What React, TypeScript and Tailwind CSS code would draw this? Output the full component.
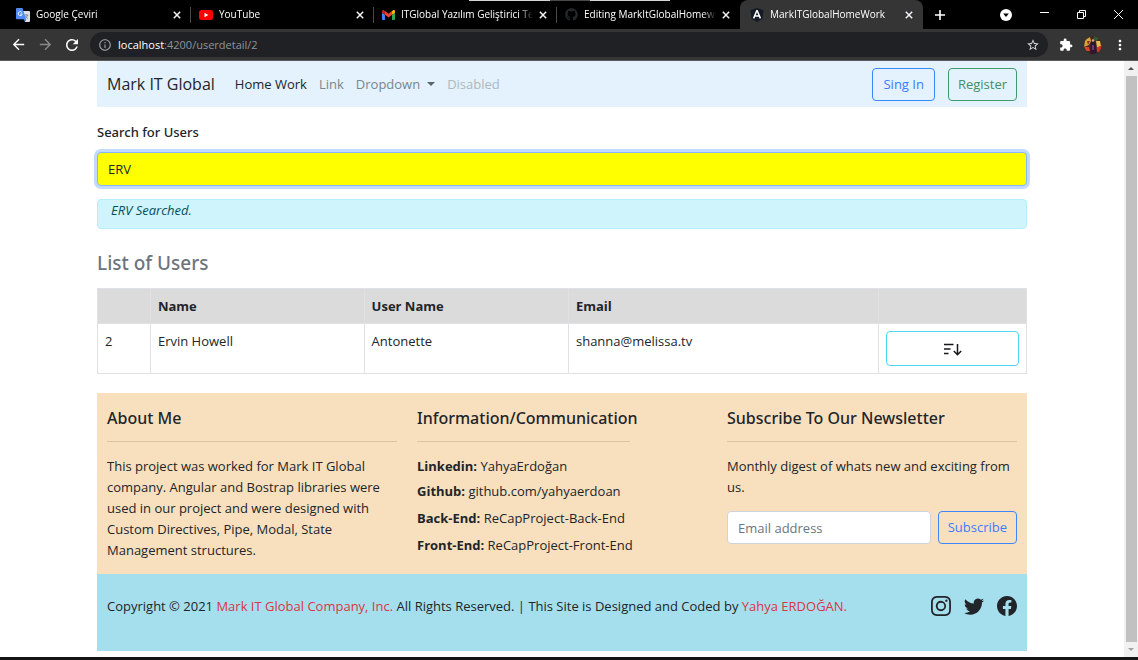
import type { ReactNode } from "react";
import { BsInstagram, BsTwitter, BsFacebook } from "react-icons/bs";
import { FaGithub } from "react-icons/fa";
import { MdArrowBack, MdArrowForward, MdRefresh, MdStarBorder, MdMoreVert, MdInfoOutline, MdExtension } from "react-icons/md";

function TranslateIcon() {
  return (
    <svg viewBox="0 0 14 14" className="size-[14px]">
      <path d="M6 3h7a1 1 0 0 1 1 1v9a1 1 0 0 1-1 1H9z" fill="#dfe1e4" />
      <path d="M8.3 7h4M10.3 6v1M11.6 7c-.4 1.8-1.600 2.800-2.600 3.300M9.500 8.200c.6 1.200 1.600 2 2.600 2.400" stroke="#6b7f8c" strokeWidth=".8" fill="none" />
      <path d="M7.500 11.300 9 14 10.300 11.300z" fill="#3367d6" />
      <path d="M1 0h5.500L10 11.300H1a1 1 0 0 1-1-1V1a1 1 0 0 1 1-1z" fill="#4f8bf5" />
      <path d="M5.800 4.400A2 2 0 1 0 6.200 6H4.300" stroke="#fff" strokeWidth=".9" fill="none" />
    </svg>
  );
}

function YouTubeIcon() {
  return (
    <svg viewBox="0 0 14 10" className="h-[10px] w-[14px]">
      <rect width="14" height="10" rx="2.500" fill="#f00" />
      <path d="M5.500 2.800v4.400L9.300 5z" fill="#fff" />
    </svg>
  );
}

function GmailIcon() {
  return (
    <svg viewBox="52 42 88 66" className="h-[10px] w-[13px]">
      <path fill="#4285f4" d="M58 108h14V74L52 59v43c0 3.320 2.690 6 6 6" />
      <path fill="#34a853" d="M120 108h14c3.320 0 6-2.690 6-6V59l-20 15" />
      <path fill="#fbbc04" d="M120 48v26l20-15v-8c0-7.420-8.470-11.650-14.400-7.200" />
      <path fill="#ea4335" d="M72 74V48l24 18 24-18v26L96 92" />
      <path fill="#c5221f" d="M52 51v8l20 15V48l-5.600-4.200c-5.940-4.450-14.400-.22-14.400 7.200" />
    </svg>
  );
}

function AngularIcon() {
  return (
    <svg viewBox="0 0 14 14" className="size-[14px]">
      <path d="M7 0l6.500 2.300-1 8.500L7 14l-5.500-3.200-1-8.500z" fill="#141b26" />
      <path d="M7 2.300 3.600 10.400M7 2.300l3.400 8.100M5 8h4" stroke="#fff" strokeWidth="1.500" fill="none" />
    </svg>
  );
}

function CloseIcon() {
  return (
    <svg viewBox="0 0 8 8" className="size-2">
      <path d="M.8.8l6.400 6.400M7.200.8.8 7.200" stroke="#f1f3f4" strokeWidth="1.500" />
    </svg>
  );
}

function SortIcon() {
  return (
    <svg viewBox="0 0 18 14" className="h-[14px] w-[18px]" fill="none" stroke="#16181b" strokeWidth="1.500">
      <path d="M0 2.500h9.500M0 7h6.500M0 11.500h4.500M13.500 2v10.500M9.800 9l3.700 3.700L17.200 9" />
    </svg>
  );
}

function Avatar() {
  return (
    <svg viewBox="0 0 18 18" className="size-[18px]">
      <clipPath id="avatar-clip">
        <circle cx="9" cy="9" r="9" />
      </clipPath>
      <g clipPath="url(#avatar-clip)">
        <rect width="18" height="18" fill="#4a2420" />
        <path d="M1 4l5-3 1 4-2 4-5 2z" fill="#d9a53a" />
        <path d="M3 5l3 0-2 4z" fill="#8a2f22" />
        <path d="M12 5l4 0 1 5-4 2z" fill="#e3bd4a" />
        <path d="M0 11l5 0 1 4-4 0z" fill="#d8452c" />
        <path d="M12 12l6-3-2 7-3 0z" fill="#c8372a" />
        <path d="M10 0l5 2-2 3-4-1z" fill="#2f5a33" />
        <path d="M7 6l3-2 2 4 1 10H6z" fill="#2c1730" />
        <circle cx="9" cy="4.500" r="1.300" fill="#d9a48c" />
        <path d="M8 9l2 0 0 5-2 0z" fill="#6a3a78" />
      </g>
    </svg>
  );
}

const tabs: { title: string; icon: ReactNode; active?: boolean }[] = [
  { title: "Google Çeviri", icon: <TranslateIcon /> },
  { title: "YouTube", icon: <YouTubeIcon /> },
  { title: "ITGlobal Yazılım Geliştirici Test", icon: <GmailIcon /> },
  { title: "Editing MarkItGlobalHomework", icon: <FaGithub className="size-[13px] text-[#24292e]" /> },
  { title: "MarkITGlobalHomeWork", icon: <AngularIcon />, active: true },
];

function BrowserChrome() {
  return (
    <header className="border-b border-[#5a5a5a] bg-[#353535] text-white">
      <div className="relative flex h-[29px] bg-black pl-2">
        <div className="absolute top-0 left-[469px] flex h-px w-[201px]">
          <span className="flex-1 bg-[#d5d5d5]" />
          <span className="w-10 bg-[#4a4a4a]" />
          <span className="flex-1 bg-[#d5d5d5]" />
        </div>
        {tabs.map((tab, i) => (
          <div
            key={tab.title}
            className={
              tab.active
                ? "flex w-[183px] items-center gap-[6px] rounded-t-lg bg-[#353535] px-[10px]"
                : "flex w-[183px] items-center gap-[6px] pl-2"
            }
          >
            {tab.icon}
            <span className="min-w-0 flex-1 overflow-hidden text-[10px] whitespace-nowrap [mask-image:linear-gradient(to_right,black_90%,transparent)]">
              {tab.title}
            </span>
            <button aria-label="Close tab">
              <CloseIcon />
            </button>
            {!tab.active && <span className={i < 3 ? "ml-[3px] h-4 w-px bg-[#4a4a4a]" : "ml-[3px] w-px"} />}
          </div>
        ))}
        <button aria-label="New tab" className="ml-3 flex items-center">
          <svg viewBox="0 0 10 10" className="size-[10px]">
            <path d="M5 0v10M0 5h10" stroke="#fff" strokeWidth="1.600" />
          </svg>
        </button>
        <div className="ml-auto flex items-center gap-7 pr-[15px]">
          <button aria-label="Search tabs">
            <svg viewBox="0 0 12 12" className="size-3">
              <circle cx="6" cy="6" r="6" fill="#fff" />
              <path d="M3.200 4.500h5.600L6 8z" fill="#000" />
            </svg>
          </button>
          <button aria-label="Minimize">
            <svg viewBox="0 0 9 9" className="size-[9px]">
              <path d="M0 2.500h9" stroke="#fff" />
            </svg>
          </button>
          <button aria-label="Restore">
            <svg viewBox="0 0 9 9" className="size-[9px]" fill="none" stroke="#fff">
              <path d="M.5 2.500h6v6h-6zM2.500 2.500v-2h6v6h-2" />
            </svg>
          </button>
          <button aria-label="Close">
            <svg viewBox="0 0 9 9" className="size-[9px]">
              <path d="M0 0l9 9M9 0 0 9" stroke="#fff" />
            </svg>
          </button>
        </div>
      </div>
      <div className="flex h-[31px] items-center pr-[10px] pl-[10px]">
        <button aria-label="Back"><MdArrowBack className="size-[17px]" /></button>
        <button aria-label="Forward" className="ml-[10px]"><MdArrowForward className="size-[17px] text-[#8a8a8a]" /></button>
        <button aria-label="Reload" className="ml-[9px]"><MdRefresh className="size-[18px]" /></button>
        <div className="ml-[9px] flex h-[25px] flex-1 items-center rounded-full bg-[#202124] px-2">
          <MdInfoOutline className="size-[14px] text-[#9aa0a6]" />
          <span className="ml-[6px] flex-1 text-[11px] text-[#8f9499]">
            <span className="text-white">localhost</span>:4200/userdetail/2
          </span>
          <MdStarBorder className="size-[14px] text-[#d5d7da]" />
        </div>
        <MdExtension className="ml-[11px] size-[14px]" />
        <span className="ml-[11px]"><Avatar /></span>
        <button aria-label="Menu" className="ml-[10px]"><MdMoreVert className="size-4" /></button>
      </div>
    </header>
  );
}

function Navbar() {
  return (
    <nav className="flex h-[46px] items-center bg-[#e3f2fd] px-[10px]">
      <a href="#" className="text-[16px] text-[#212529]">Mark IT Global</a>
      <div className="ml-5 flex items-center gap-3 text-[#7b858d]">
        <a href="#" className="text-[#212529]">Home Work</a>
        <a href="#">Link</a>
        <a href="#" className="flex items-center gap-[7px]">
          Dropdown
          <span className="border-x-4 border-t-4 border-x-transparent border-t-[#5c646b]" />
        </a>
        <a href="#" className="text-[#adb8c0]">Disabled</a>
      </div>
      <div className="ml-auto flex gap-[13px]">
        <button className="h-[33px] rounded border border-[#3b86fd] px-[10px] text-[#3b7cfd]">Sing In</button>
        <button className="h-[33px] rounded border border-[#3f9a6d] px-[9px] text-[#3f8f6a]">Register</button>
      </div>
    </nav>
  );
}

const users = [{ id: 2, name: "Ervin Howell", userName: "Antonette", email: "shanna@melissa.tv" }];

function UserTable() {
  return (
    <table className="mt-3 w-full table-fixed border-collapse text-left text-[#212529]">
      <colgroup>
        <col className="w-[5.7%]" />
        <col className="w-[23%]" />
        <col className="w-[22%]" />
        <col className="w-[33.4%]" />
        <col className="w-[15.9%]" />
      </colgroup>
      <thead className="bg-[#dbdbdb]">
        <tr className="h-[35px]">
          {["", "Name", "User Name", "Email", ""].map((head, i) => (
            <th key={i} className="border border-[#dee2e6] px-[7px] font-bold">{head}</th>
          ))}
        </tr>
      </thead>
      <tbody>
        {users.map((user) => (
          <tr key={user.id} className="h-[50px] align-top">
            <td className="border border-[#dee2e6] px-[7px] py-[7px]">{user.id}</td>
            <td className="border border-[#dee2e6] px-[7px] py-[7px]">{user.name}</td>
            <td className="border border-[#dee2e6] px-[7px] py-[7px]">{user.userName}</td>
            <td className="border border-[#dee2e6] px-[7px] py-[7px]">{user.email}</td>
            <td className="border border-[#dee2e6] px-[7px] py-[7px]">
              <button aria-label="Details" className="flex h-[35px] w-full items-center justify-center rounded border border-[#4fd8f5]">
                <SortIcon />
              </button>
            </td>
          </tr>
        ))}
      </tbody>
    </table>
  );
}

function Footer() {
  return (
    <footer className="mt-[19px] text-[#212529]">
      <div className="grid grid-cols-3 bg-[#f8e0bf] pt-[14px] pb-[13px]">
        <section className="px-[10px]">
          <h5 className="font-['Noto_Sans','Open_Sans',sans-serif] text-[16px] leading-[22px] font-medium">About Me</h5>
          <hr className="mt-3 mb-[14px] border-[#d9c4a6]" />
          <p>
            This project was worked for Mark IT Global company. Angular and Bostrap libraries were used in our
            project and were designed with Custom Directives, Pipe, Modal, State Management structures.
          </p>
        </section>
        <section className="w-[75%] px-[10px]">
          <h5 className="font-['Noto_Sans','Open_Sans',sans-serif] text-[16px] leading-[22px] font-medium">Information/Communication</h5>
          <hr className="mt-3 mb-[14px] border-[#d9c4a6]" />
          <ul className="whitespace-nowrap">
            <li><b>Linkedin:</b> YahyaErdoğan</li>
            <li className="mt-1"><b>Github:</b> github.com/yahyaerdoan</li>
            <li className="mt-[6px]"><b>Back-End:</b> ReCapProject-Back-End</li>
            <li className="mt-[6px]"><b>Front-End:</b> ReCapProject-Front-End</li>
          </ul>
        </section>
        <section className="px-[10px]">
          <h5 className="font-['Noto_Sans','Open_Sans',sans-serif] text-[16px] leading-[22px] font-medium">Subscribe To Our Newsletter</h5>
          <hr className="mt-3 mb-[14px] border-[#d9c4a6]" />
          <p>Monthly digest of whats new and exciting from us.</p>
          <form className="mt-[13px] flex gap-[7px]">
            <input
              type="email"
              aria-label="Email address"
              placeholder="Email address"
              className="h-[33px] min-w-0 flex-1 rounded border border-[#ced4da] bg-white px-[10px] placeholder:text-[#6c757d]"
            />
            <button type="button" className="h-[33px] rounded border border-[#3b86fd] px-[9px] text-[#3b7cfd]">
              Subscribe
            </button>
          </form>
        </section>
      </div>
      <div className="flex h-[77px] items-start justify-between bg-[#a5dfed] px-[10px] pt-[22px]">
        <p>
          Copyright © 2021 <a href="#" className="text-[#dc3545]">Mark IT Global Company, Inc.</a> All Rights Reserved. |
          This Site is Designed and Coded by <a href="#" className="text-[#dc3545]">Yahya ERDOĞAN.</a>
        </p>
        <div className="flex gap-[13px]">
          <a href="#" aria-label="Instagram"><BsInstagram className="size-5" /></a>
          <a href="#" aria-label="Twitter"><BsTwitter className="size-5" /></a>
          <a href="#" aria-label="Facebook"><BsFacebook className="size-5" /></a>
        </div>
      </div>
    </footer>
  );
}

function Scrollbar() {
  return (
    <div className="flex w-[14px] flex-col items-center bg-[#f1f1f1]">
      <span className="my-[6px] border-x-3 border-b-3 border-x-transparent border-b-[#505050]" />
      <span className="w-[11px] flex-1 bg-[#c1c1c1]" />
      <span className="my-[6px] border-x-3 border-t-3 border-x-transparent border-t-[#a3a3a3]" />
    </div>
  );
}

export default function App() {
  return (
    <div className="flex min-h-screen flex-col border-b-3 border-[#151515] bg-white font-['Open_Sans','Noto_Sans',sans-serif] text-[13px] leading-[21px]">
      <BrowserChrome />
      <div className="flex flex-1">
        <main className="flex-1">
          <div className="mx-auto w-full max-w-[930px]">
            <Navbar />
            <label
              htmlFor="search"
              className="mt-[15px] block font-['Noto_Sans','Open_Sans',sans-serif] font-medium text-[#212529]"
            >
              Search for Users
            </label>
            <input
              id="search"
              defaultValue="ERV"
              className="mt-[9px] block h-[34px] w-full rounded border border-[#86b7fe] bg-[#ff0] px-[10px] text-[#212529] shadow-[0_0_0_3px_#c2daff] outline-none"
            />
            <div className="mt-[13px] h-[30px] rounded border border-[#b6effb] bg-[#cff4fc] px-[13px] text-[#055160] italic">
              ERV Searched.
            </div>
            <h4 className="mt-[21px] font-['Noto_Sans','Open_Sans',sans-serif] text-[19px] leading-[26px] font-medium text-[#6c757d]">
              List of Users
            </h4>
            <UserTable />
            <Footer />
          </div>
        </main>
        <Scrollbar />
      </div>
    </div>
  );
}
